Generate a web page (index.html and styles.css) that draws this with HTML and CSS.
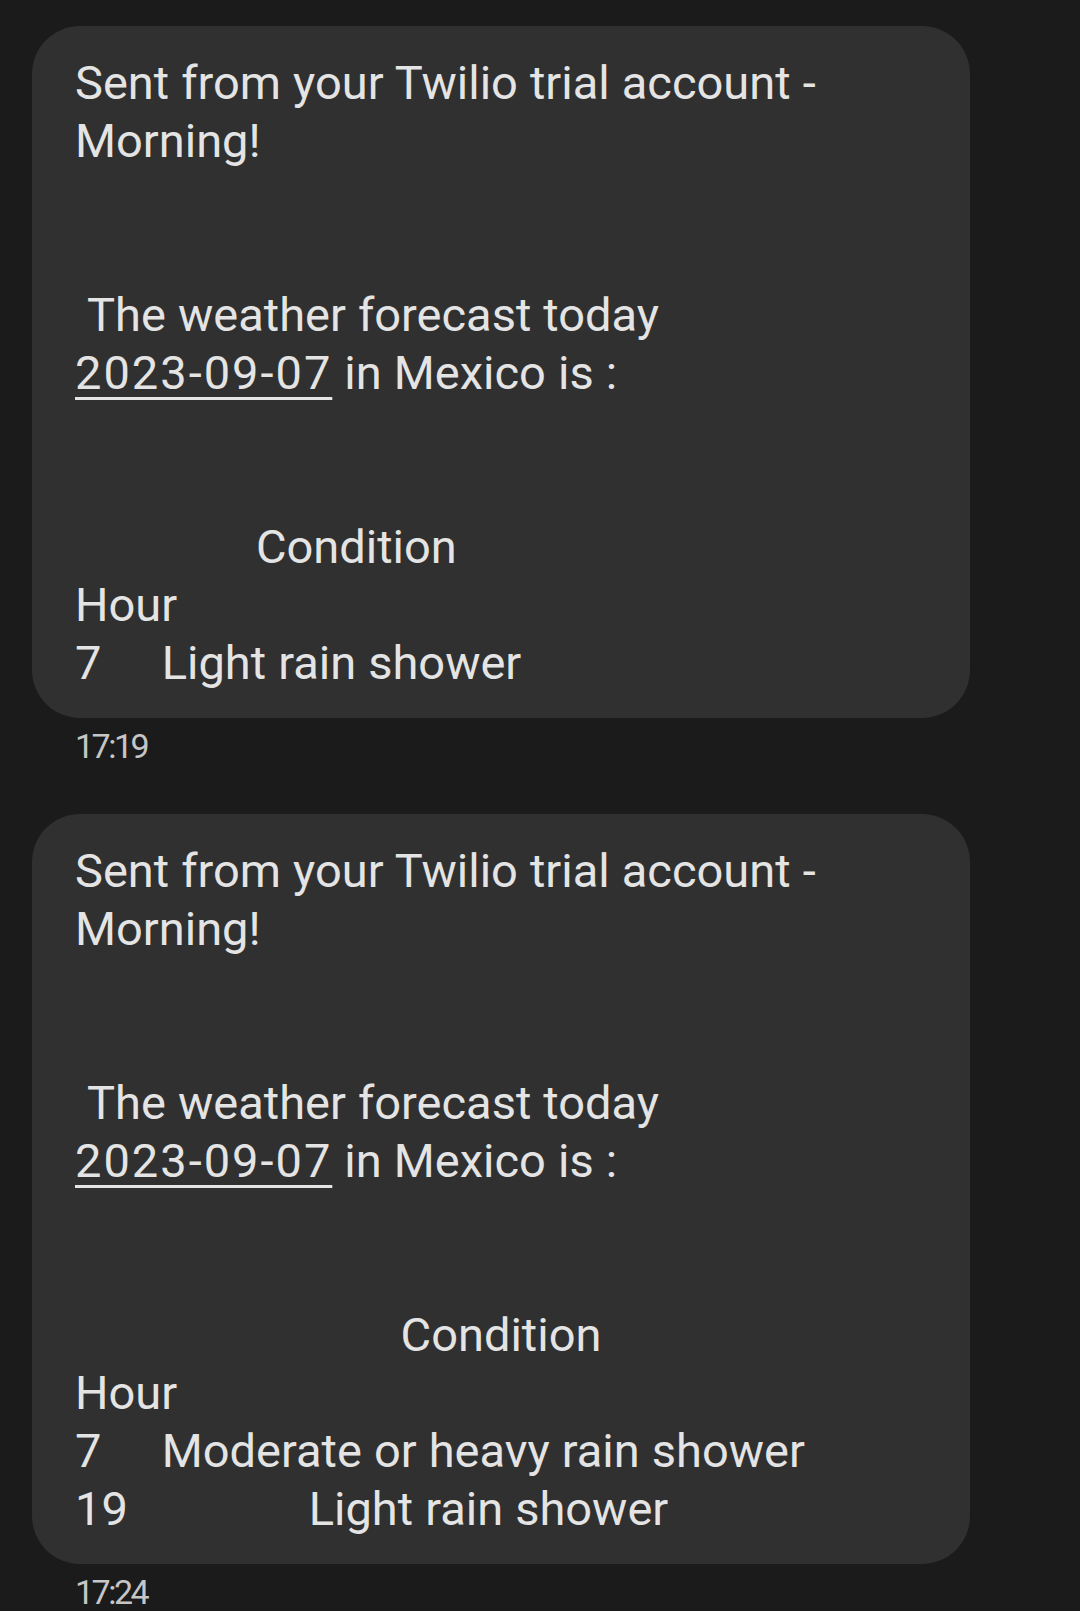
FILE: index.html
```html
<!DOCTYPE html>
<html lang="en">
<head>
<meta charset="utf-8">
<title>Messages</title>
<link rel="stylesheet" href="styles.css">
</head>
<body>
<main class="thread">
  <div class="msg">
    <div class="bubble"><p class="text">Sent from your Twilio trial account - Morning!


 The weather forecast today <a class="date">2023-09-07</a> in Mexico is :


               Condition
Hour
7     Light rain shower</p></div>
    <div class="time">17:19</div>
  </div>
  <div class="msg">
    <div class="bubble"><p class="text">Sent from your Twilio trial account - Morning!


 The weather forecast today <a class="date">2023-09-07</a> in Mexico is :


                           Condition
Hour
7     Moderate or heavy rain shower
19               Light rain shower</p></div>
    <div class="time">17:24</div>
  </div>
</main>
</body>
</html>
```
FILE: styles.css
```css
html, body {
  margin: 0;
  padding: 0;
  background: #1b1b1b;
}

body {
  font-family: Roboto, "Noto Sans", sans-serif;
  color: #e4e4e4;
}

.thread {
  display: flex;
  flex-direction: column;
  gap: 48px;
  padding: 26px 0 0 32px;
}

.msg {
  display: flex;
  flex-direction: column;
  align-items: flex-start;
}

.bubble {
  width: 938px;
  box-sizing: border-box;
  background: #303030;
  border-radius: 48px;
  padding: 28px 60px 26px 43px;
}

.text {
  margin: 0;
  font-size: 47px;
  line-height: 58px;
  white-space: pre-wrap;
  word-spacing: 0.4px;
  color: #e4e4e4;
}

.date {
  color: inherit;
  white-space: nowrap;
  text-decoration: underline;
  text-decoration-thickness: 3px;
  text-underline-offset: 7.5px;
  letter-spacing: 2px;
}

.time {
  margin-top: 8px;
  padding-left: 43px;
  font-size: 34px;
  line-height: 40px;
  letter-spacing: -2.5px;
  color: #c6c6c6;
}
```
